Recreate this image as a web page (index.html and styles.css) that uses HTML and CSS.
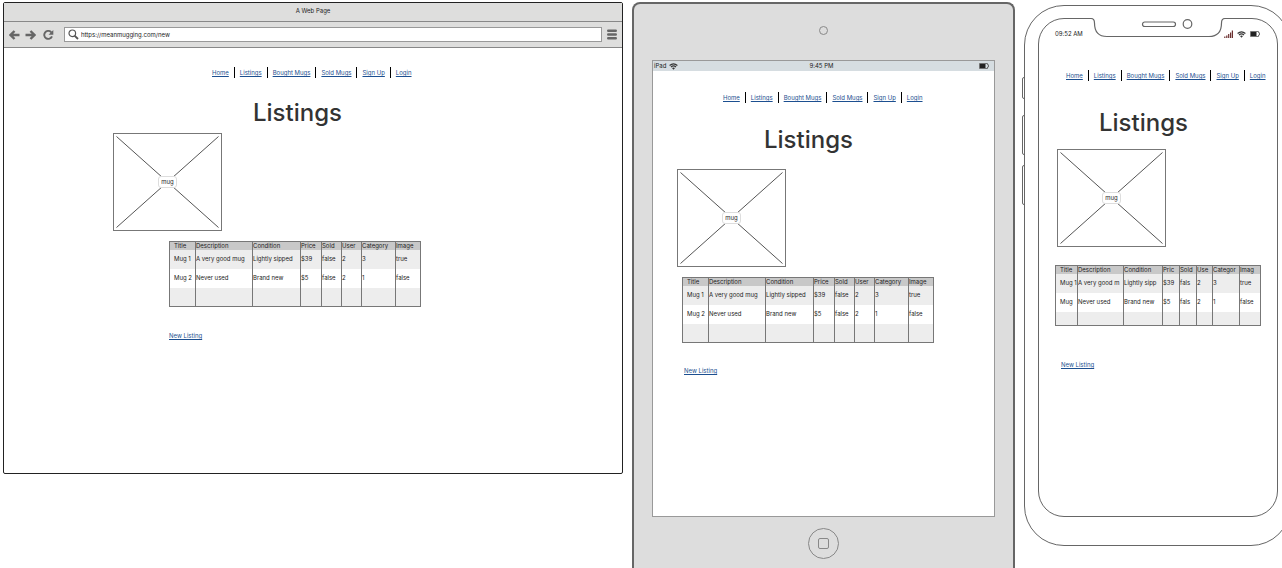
FILE: index.html
```html
<!DOCTYPE html>
<html lang="en">
<head>
<meta charset="utf-8">
<title>Listings wireframes</title>
<link rel="stylesheet" href="styles.css">
</head>
<body>
<main class="board">

  <section class="browser">
    <header class="titlebar">A Web Page</header>
    <div class="toolbar">
      <div class="tools">
        <button class="icon-button" aria-label="Back"><svg width="11" height="10" viewBox="0 0 11 10"><path d="M10.500 5H2M5.500 1L1.500 5L5.500 9" fill="none" stroke="#666" stroke-width="2.400"/></svg></button>
        <button class="icon-button" aria-label="Forward"><svg width="11" height="10" viewBox="0 0 11 10"><path d="M.5 5H9M5.500 1L9.500 5L5.500 9" fill="none" stroke="#666" stroke-width="2.400"/></svg></button>
        <button class="icon-button reload" aria-label="Reload"><svg width="11" height="10" viewBox="0 0 11 10"><path d="M8.300 2.300A4 4 0 1 0 9 6.300" fill="none" stroke="#666" stroke-width="1.900"/><path d="M10.300 0V4.700H5.600Z" fill="#666"/></svg></button>
      </div>
      <label class="address">
        <svg width="11" height="11" viewBox="0 0 11 11"><circle cx="4.300" cy="4.300" r="3.300" fill="none" stroke="#555" stroke-width="1.200"/><path d="M6.800 6.800L10 10" stroke="#555" stroke-width="1.800"/></svg>
        <input class="url" type="text" value="https://meanmugging.com/new" aria-label="Address">
      </label>
      <button class="icon-button" aria-label="Menu"><svg width="10" height="11" viewBox="0 0 10 11"><path d="M1.200 1.700H8.800M1.200 5.500H8.800M1.200 9.300H8.800" stroke="#666" stroke-width="2.400" stroke-linecap="round"/></svg></button>
    </div>
    <div class="content">
      <nav><ul class="nav">
        <li><a href="#">Home</a></li><li><a href="#">Listings</a></li><li><a href="#">Bought Mugs</a></li><li><a href="#">Sold Mugs</a></li><li><a href="#">Sign Up</a></li><li><a href="#">Login</a></li>
      </ul></nav>
      <h1 class="heading">Listings</h1>
      <figure class="picture">
        <svg class="cross" viewBox="0 0 107 96" preserveAspectRatio="none"><path d="M2.500 2.500L104.500 93.500M104.500 2.500L2.500 93.500" stroke="#555" fill="none"/></svg>
        <figcaption class="caption">mug</figcaption>
      </figure>
      <table class="listings">
        <colgroup><col class="c-title"><col class="c-desc"><col class="c-cond"><col class="c-price"><col class="c-sold"><col class="c-user"><col class="c-cat"><col class="c-image"></colgroup>
        <thead><tr><th>Title</th><th>Description</th><th>Condition</th><th>Price</th><th>Sold</th><th>User</th><th>Category</th><th>Image</th></tr></thead>
        <tbody>
          <tr><td>Mug 1</td><td>A very good mug</td><td>Lightly sipped</td><td>$39</td><td>false</td><td>2</td><td>3</td><td>true</td></tr>
          <tr><td>Mug 2</td><td>Never used</td><td>Brand new</td><td>$5</td><td>false</td><td>2</td><td>1</td><td>false</td></tr>
          <tr><td></td><td></td><td></td><td></td><td></td><td></td><td></td><td></td></tr>
        </tbody>
      </table>
      <a class="new-link" href="#">New Listing</a>
    </div>
  </section>

  <section class="tablet">
    <div class="camera"></div>
    <div class="tablet-screen">
      <header class="tablet-status">
        <span class="carrier">iPad <svg width="9" height="7" viewBox="0 0 9 7"><path d="M.6 2.500Q4.500-.9 8.400 2.500M2 4Q4.500 1.900 7 4" fill="none" stroke="#333" stroke-width="1.200"/><path d="M3 5L4.500 6.800L6 5Q4.500 4 3 5Z" fill="#333"/></svg></span>
        <span>9:45 PM</span>
        <svg class="battery" width="10" height="6" viewBox="0 0 10 6"><path d="M.5.5H8.500V1.800H9.500V4H8.500V5.500H.5Z" fill="none" stroke="#555" stroke-width=".8"/><path d="M1 1H6.500V5H1Z" fill="#222"/></svg>
      </header>
      <div class="content">
        <nav><ul class="nav">
          <li><a href="#">Home</a></li><li><a href="#">Listings</a></li><li><a href="#">Bought Mugs</a></li><li><a href="#">Sold Mugs</a></li><li><a href="#">Sign Up</a></li><li><a href="#">Login</a></li>
        </ul></nav>
        <h1 class="heading">Listings</h1>
        <figure class="picture">
          <svg class="cross" viewBox="0 0 107 96" preserveAspectRatio="none"><path d="M2.500 2.500L104.500 93.500M104.500 2.500L2.500 93.500" stroke="#555" fill="none"/></svg>
          <figcaption class="caption">mug</figcaption>
        </figure>
        <table class="listings">
          <colgroup><col class="c-title"><col class="c-desc"><col class="c-cond"><col class="c-price"><col class="c-sold"><col class="c-user"><col class="c-cat"><col class="c-image"></colgroup>
          <thead><tr><th>Title</th><th>Description</th><th>Condition</th><th>Price</th><th>Sold</th><th>User</th><th>Category</th><th>Image</th></tr></thead>
          <tbody>
            <tr><td>Mug 1</td><td>A very good mug</td><td>Lightly sipped</td><td>$39</td><td>false</td><td>2</td><td>3</td><td>true</td></tr>
            <tr><td>Mug 2</td><td>Never used</td><td>Brand new</td><td>$5</td><td>false</td><td>2</td><td>1</td><td>false</td></tr>
            <tr><td></td><td></td><td></td><td></td><td></td><td></td><td></td><td></td></tr>
          </tbody>
        </table>
        <a class="new-link" href="#">New Listing</a>
      </div>
    </div>
    <button class="home-button" aria-label="Home"><span class="home-square"></span></button>
  </section>

  <section class="phone">
    <i class="side-key key-mute"></i><i class="side-key key-up"></i><i class="side-key key-down"></i>
    <div class="phone-screen">
      <svg class="notch" width="140" height="22" viewBox="0 0 140 22">
        <path d="M0 0H140V1.500H137Q133.500 1.500 133.500 6Q133.500 19.500 121 19.500H19Q6.500 19.500 6.500 6Q6.500 1.500 3 1.500H0Z" fill="#fff"/>
        <path d="M0 1.500H3Q6.500 1.500 6.500 6Q6.500 19.500 19 19.500H121Q133.500 19.500 133.500 6Q133.500 1.500 137 1.500H140" fill="none" stroke="#666" stroke-width="1.200"/>
        <rect x="54.500" y="5" width="33" height="4.500" rx="2.200" fill="#fff" stroke="#666" stroke-width="1.200"/>
        <circle cx="99.500" cy="7" r="4.300" fill="#fff" stroke="#666" stroke-width="1.200"/>
      </svg>
      <header class="phone-status">
        <span>09:52 AM</span>
        <span class="signals">
          <svg width="9" height="8" viewBox="0 0 9 8"><path d="M.8 8V6.500M2.800 8V5.500M4.700 8V4M6.600 8V2.500M8.400 8V.5" stroke="#6b3030" stroke-width="1.200"/></svg>
          <svg width="9" height="7" viewBox="0 0 9 7"><path d="M.6 2.500Q4.500-.9 8.400 2.500M2 4Q4.500 1.900 7 4" fill="none" stroke="#333" stroke-width="1.200"/><path d="M3 5L4.500 6.800L6 5Q4.500 4 3 5Z" fill="#333"/></svg>
          <svg width="10" height="6" viewBox="0 0 10 6"><path d="M.5.5H8.500V1.800H9.500V4H8.500V5.500H.5Z" fill="none" stroke="#555" stroke-width=".8"/><path d="M1 1H6.500V5H1Z" fill="#222"/></svg>
        </span>
      </header>
      <div class="content">
        <nav><ul class="nav">
          <li><a href="#">Home</a></li><li><a href="#">Listings</a></li><li><a href="#">Bought Mugs</a></li><li><a href="#">Sold Mugs</a></li><li><a href="#">Sign Up</a></li><li><a href="#">Login</a></li>
        </ul></nav>
        <h1 class="heading">Listings</h1>
        <figure class="picture">
          <svg class="cross" viewBox="0 0 107 96" preserveAspectRatio="none"><path d="M2.500 2.500L104.500 93.500M104.500 2.500L2.500 93.500" stroke="#555" fill="none"/></svg>
          <figcaption class="caption">mug</figcaption>
        </figure>
        <table class="listings">
          <colgroup><col class="c-title"><col class="c-desc"><col class="c-cond"><col class="c-price"><col class="c-sold"><col class="c-user"><col class="c-cat"><col class="c-image"></colgroup>
          <thead><tr><th>Title</th><th>Description</th><th>Condition</th><th>Pric</th><th>Sold</th><th>Use</th><th>Categor</th><th>Imag</th></tr></thead>
          <tbody>
            <tr><td>Mug 1</td><td>A very good m</td><td>Lightly sipp</td><td>$39</td><td>fals</td><td>2</td><td>3</td><td>true</td></tr>
            <tr><td>Mug</td><td>Never used</td><td>Brand new</td><td>$5</td><td>fals</td><td>2</td><td>1</td><td>false</td></tr>
            <tr class="short"><td></td><td></td><td></td><td></td><td></td><td></td><td></td><td></td></tr>
          </tbody>
        </table>
        <a class="new-link" href="#">New Listing</a>
      </div>
    </div>
  </section>

</main>
</body>
</html>
```
FILE: styles.css
```css
* { box-sizing: border-box; }

body {
  margin: 0;
  background: #fff;
  color: #222;
  font: 6px/8px Inter, "Liberation Sans", sans-serif;
}

svg { display: block; flex: none; }

/* the phone runs past the right edge of the board */
body { overflow: hidden; }
.board {
  display: grid;
  grid-template-columns: 620fr 383fr 267fr;
  column-gap: 9px;
  align-items: start;
  min-height: 100vh;
  margin-right: -9px;
  padding: 2px 0 0 3px;
}

/* Shared page content */
.content { display: flex; flex-direction: column; align-items: flex-start; }

.nav { display: flex; margin: 0; padding: 0; list-style: none; line-height: 11px; white-space: nowrap; }
.nav li + li { margin-left: 5px; padding-left: 5px; border-left: 1px solid #000; }

a { color: #1c4f90; text-decoration: underline; text-underline-offset: 1px; }

.heading { margin: 0; color: #333; font-size: 24px; line-height: 28px; font-weight: 500; }

.picture {
  display: grid;
  place-items: center;
  width: 109px;
  height: 98px;
  margin: 0;
  border: 1px solid #777;
}
.cross, .caption { grid-area: 1 / 1; }
.cross { width: 100%; height: 100%; }
.caption { z-index: 1; padding: 1px 2px; border: 1px solid #ddd; border-radius: 3px; background: #fff; }

.listings { table-layout: fixed; border-collapse: collapse; border: 1px solid #777; }
.listings th, .listings td {
  height: 19px;
  padding: 0;
  border-left: 1px solid #777;
  text-align: left;
  font-weight: 400;
  white-space: nowrap;
  overflow: hidden;
}
.listings th { height: 8px; line-height: 7px; background: #c8c8c8; }
.listings th:first-child, .listings td:first-child { padding-left: 4px; }
.listings tbody tr:nth-child(odd) { background: #ededed; }
.listings .short td { height: 14px; }
.c-title { width: 26px; }
.c-desc { width: 57px; }
.c-cond { width: 48px; }
.c-price { width: 21px; }
.c-sold, .c-user { width: 20px; }
.c-cat { width: 34px; }
.c-image { width: 25px; }

/* Browser window */
.browser { height: 472px; border: 1px solid #222; border-radius: 2px; }
.titlebar { height: 19px; padding-top: 4px; border-bottom: 1px solid #888; background: #dededd; text-align: center; }
.toolbar {
  display: flex;
  align-items: center;
  gap: 5px;
  height: 26px;
  padding: 0 5px;
  border-bottom: 1px solid #888;
  background: #dededd;
}
.tools { display: flex; gap: 5px; width: 50px; }
.icon-button { padding: 0; border: 0; background: none; }
.reload { margin-left: 2px; }
.address { display: flex; flex: 1; align-items: center; gap: 1px; height: 15px; padding-left: 3px; border: 1px solid #999; background: #fff; }
.url { flex: 1; min-width: 0; padding: 0 1px; border: 0; outline: 0; background: none; color: #222; font: inherit; }
.browser .content { padding-top: 19px; }
.browser .nav { margin-left: 208px; }
.browser .heading { margin: 21px 0 6px 249px; }
.browser .picture { margin-left: 109px; }
.browser .listings { width: 252px; margin: 10px 0 25px 165px; }
.browser .new-link { margin-left: 165px; }

/* Tablet */
.tablet {
  display: flex;
  flex-direction: column;
  align-items: center;
  align-self: stretch;
  padding: 22px 18px 0;
  border: 2px solid #666;
  border-bottom: 0;
  border-radius: 8px 8px 0 0;
  background: #ddd;
}
.camera { width: 9px; height: 9px; margin-bottom: 25px; border: 1px solid #888; border-radius: 50%; }
.tablet-screen { width: 100%; height: 457px; border: 1px solid #999; background: #fff; }
.tablet-status { display: grid; grid-template-columns: 1fr auto 1fr; align-items: center; height: 10px; padding: 0 5px 0 1px; background: #d6dde1; }
.carrier { display: flex; align-items: center; gap: 3px; }
.battery { justify-self: end; }
.home-button { display: grid; place-items: center; width: 31px; height: 31px; margin-top: 11px; padding: 0; border: 1px solid #888; border-radius: 50%; background: none; }
.home-square { width: 11px; height: 11px; border: 1px solid #888; border-radius: 2px; }
.tablet .content { padding-top: 21px; }
.tablet .nav { margin-left: 70px; }
.tablet .heading { margin: 23px 0 15px 111px; }
.tablet .picture { margin-left: 24px; }
.tablet .listings { width: 252px; margin: 10px 0 24px 29px; }
.tablet .new-link { margin-left: 31px; }

/* Phone */
.phone { position: relative; height: 541px; margin-top: 3px; padding: 12px 12px 12px 13px; border: 1px solid #666; border-radius: 40px; background: #fff; }
.phone-screen { position: relative; height: 499px; border: 1px solid #666; border-radius: 26px; }
.notch { position: absolute; top: -2px; left: 50%; margin-left: -70px; }
.phone-status { display: flex; justify-content: space-between; height: 51px; padding: 11px 17px 0 16px; }
.signals { display: flex; align-items: center; gap: 4px; height: 8px; }
.phone .nav { margin-left: 27px; }
.phone .heading { margin: 28px 0 12px 60px; }
.phone .picture { margin-left: 18px; }
.phone .listings { width: 205px; margin: 18px 0 35px 16px; }
.phone .new-link { margin-left: 22px; }
.phone .c-title { width: 22px; }
.phone .c-desc { width: 46px; }
.phone .c-cond { width: 39px; }
.phone .c-price, .phone .c-sold { width: 17px; }
.phone .c-user { width: 16px; }
.phone .c-cat { width: 27px; }
.phone .c-image { width: 21px; }
.side-key { position: absolute; left: -3px; width: 3px; height: 40px; border: 1px solid #666; border-radius: 2px 0 0 2px; }
.key-mute { top: 71px; height: 22px; }
.key-up { top: 109px; }
.key-down { top: 159px; }
```
